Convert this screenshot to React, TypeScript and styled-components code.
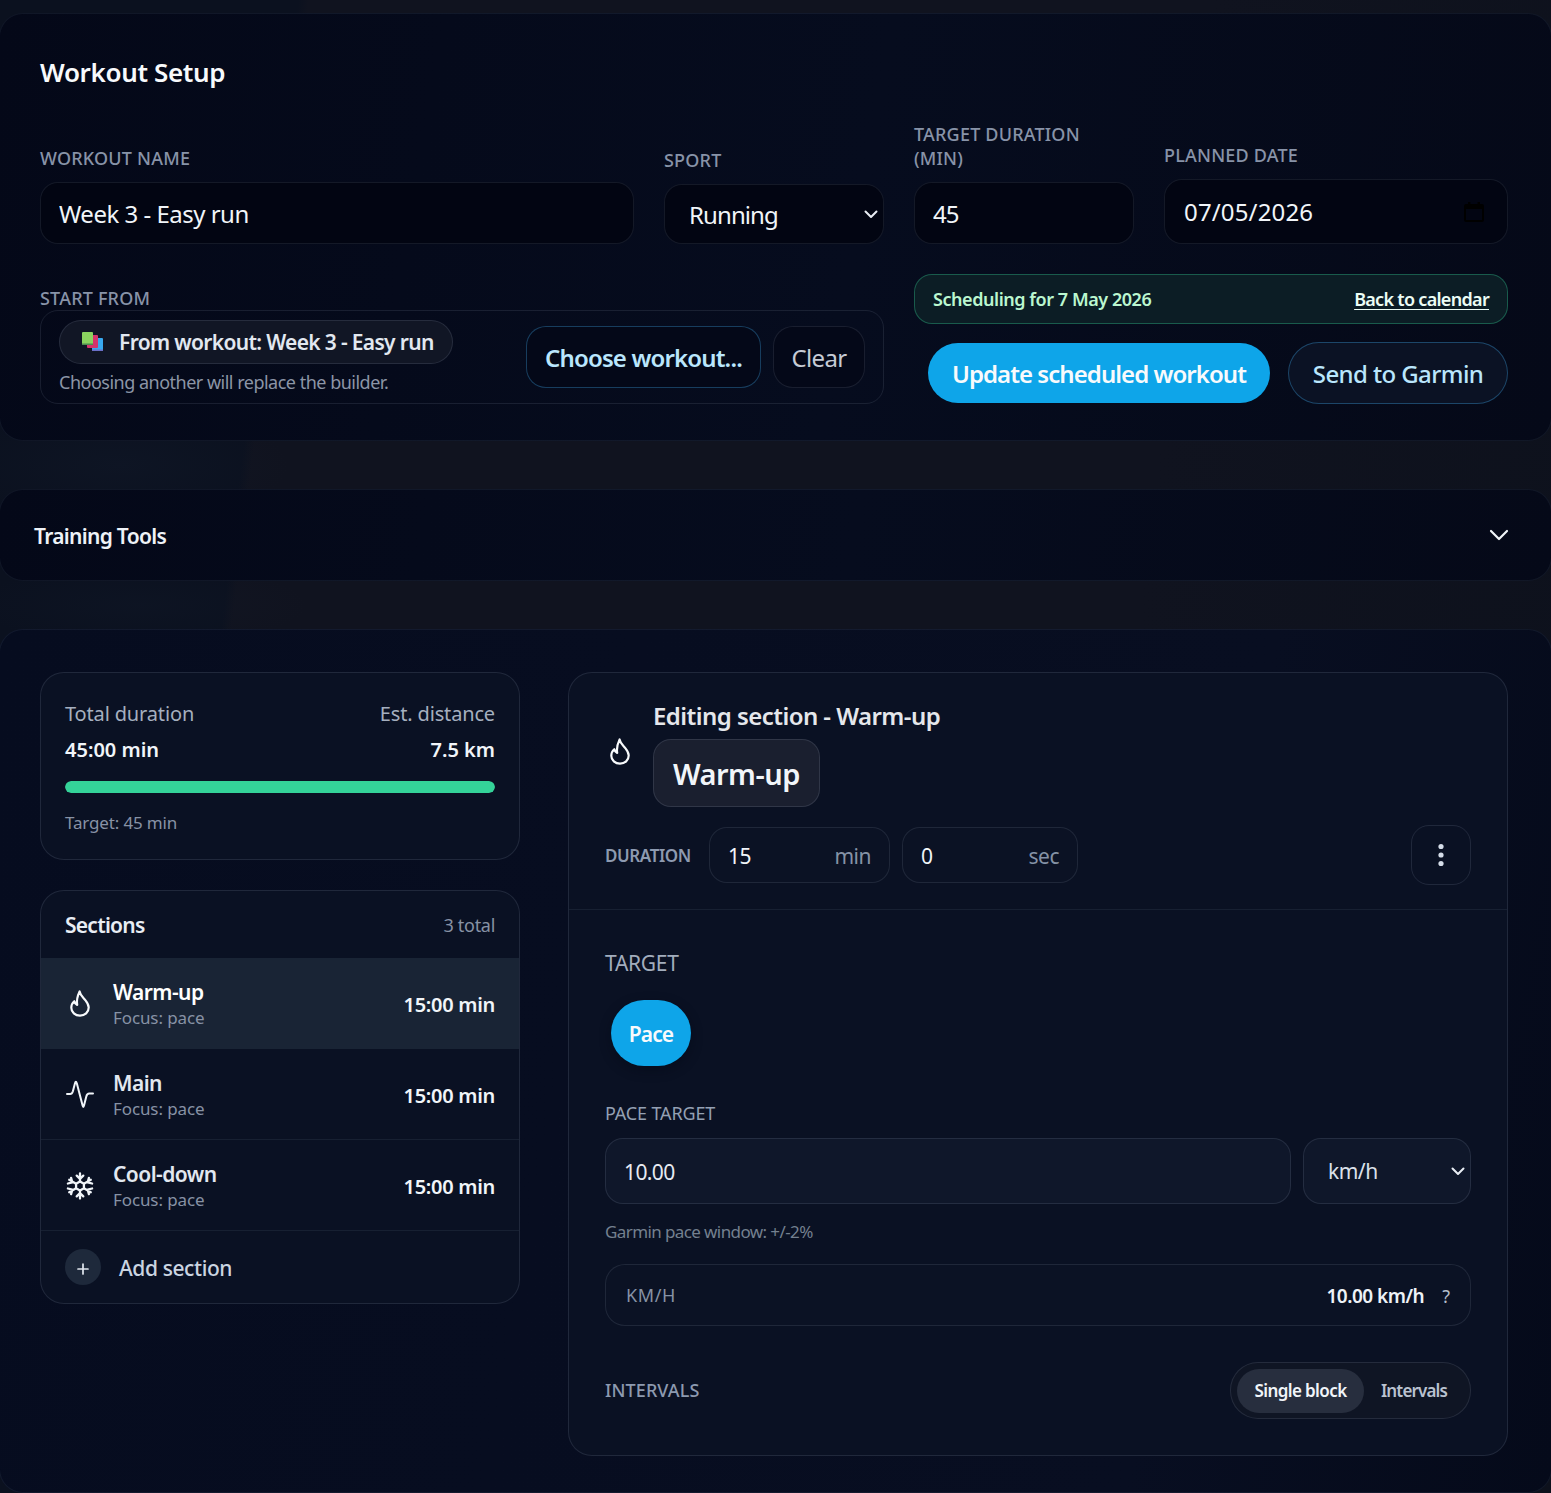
import React from "react";
import styled, { createGlobalStyle } from "styled-components";

const Global = createGlobalStyle`
  html, body { margin: 0; padding: 0; background: #0c111f; }
  body { font-family: "Noto Sans", "Open Sans", "Liberation Sans", sans-serif; color: #f1f5f9; }
  * { box-sizing: border-box; }
  input, select, button { font-family: inherit; }
`;

const chevronBg = `url("data:image/svg+xml;utf8,<svg xmlns='http://www.w3.org/2000/svg' width='14' height='9' viewBox='0 0 14 9' fill='none' stroke='%23e8edf4' stroke-width='2' stroke-linecap='round' stroke-linejoin='round'><path d='M1.5 1.5L7 7l5.5-5.5'/></svg>")`;

const Page = styled.div`
  width: 1551px;
  height: 1493px;
  overflow: hidden;
  padding-top: 13px;
  display: flex;
  flex-direction: column;
  gap: 48px;
  background:
    radial-gradient(ellipse 170px 60px at 120px 465px, rgba(40, 54, 80, 0.1), transparent),
    radial-gradient(ellipse 170px 40px at 140px 605px, rgba(40, 54, 80, 0.08), transparent),
    linear-gradient(97deg, #0b111f 0 17.2%, #10131f 17.8% 70%, #0d111c 100%);
`;

const Panel = styled.section`
  margin: 0 -1px;
  border: 1px solid rgba(148, 163, 184, 0.09);
  border-radius: 24px;
  background: linear-gradient(100deg, #040818 0%, #060c1e 55%, #050918 100%);
`;

const SetupPanel = styled(Panel)`
  height: 428px;
  padding: 0 43px 0 40px;
`;

const PanelTitle = styled.h2`
  margin: 0;
  padding-top: 40px;
  height: 108px;
  font-size: 26px;
  line-height: 36px;
  font-weight: 600;
  letter-spacing: -0.35px;
  color: #f8fafc;
`;

const FieldGrid = styled.div`
  display: grid;
  grid-template-columns: 594px 220px 220px 344px;
  column-gap: 30px;
  align-items: end;
  height: 122px;
`;

const Field = styled.label`
  display: flex;
  flex-direction: column;
`;

const Label = styled.span<{ $gap?: number }>`
  font-size: 18px;
  line-height: 24px;
  font-weight: 500;
  letter-spacing: 0.2px;
  color: #8893a8;
  text-transform: uppercase;
  max-width: 190px;
  margin-bottom: ${(p) => p.$gap ?? 12}px;
`;

const TextInput = styled.input<{ $tight?: boolean }>`
  width: 100%;
  height: 62px;
  padding: 0 18px;
  border: 1px solid rgba(148, 163, 184, 0.13);
  border-radius: 18px;
  background: #020512;
  color: #f1f5f9;
  font-size: 24px;
  letter-spacing: ${(p) => (p.$tight ? "-0.9px" : "-0.5px")};
  outline: none;
`;

const Select = styled.select`
  appearance: none;
  width: 100%;
  height: 60px;
  padding: 0 0 0 24px;
  border: 1px solid rgba(148, 163, 184, 0.13);
  border-radius: 18px;
  background: #020512 ${chevronBg} no-repeat right 5px center;
  color: #f1f5f9;
  font-size: 24px;
  letter-spacing: -0.9px;
  outline: none;
`;

const DateBox = styled.div`
  height: 65px;
  display: flex;
  align-items: center;
  padding: 0 23px 0 19px;
  border: 1px solid rgba(148, 163, 184, 0.13);
  border-radius: 18px;
  background: #020512;
`;

const DateInput = styled.input`
  flex: 1;
  min-width: 0;
  border: 0;
  padding: 0;
  background: transparent;
  color: #f1f5f9;
  font-size: 24px;
  letter-spacing: 0.15px;
  outline: none;
`;

const SecondRow = styled.div`
  margin-top: 30px;
  display: grid;
  grid-template-columns: 844px 594px;
  column-gap: 30px;
  height: 130px;
`;

const StartColumn = styled.div`
  display: flex;
  flex-direction: column;
  justify-content: flex-end;
`;

const StartBox = styled.div`
  height: 94px;
  display: flex;
  align-items: center;
  justify-content: space-between;
  padding: 0 18px;
  border: 1px solid rgba(148, 163, 184, 0.14);
  border-radius: 18px;
`;

const StartInfo = styled.div`
  display: flex;
  flex-direction: column;
  align-items: flex-start;
  gap: 5px;
`;

const Chip = styled.div`
  height: 44px;
  display: flex;
  align-items: center;
  gap: 15px;
  padding: 0 18px 0 22px;
  border: 1px solid rgba(148, 163, 184, 0.16);
  border-radius: 22px;
  background: #111625;
  font-size: 21px;
  font-weight: 600;
  letter-spacing: -0.67px;
  color: #e2e8f0;
`;

const Hint = styled.span`
  font-size: 18px;
  line-height: 26px;
  letter-spacing: -0.5px;
  color: #8c95a6;
`;

const ButtonRow = styled.div`
  display: flex;
  gap: 12px;
`;

const OutlineBtn = styled.button<{ $accent?: boolean; $w: number }>`
  width: ${(p) => p.$w}px;
  height: 62px;
  padding: 0;
  border: 1px solid ${(p) => (p.$accent ? "rgba(56, 150, 210, 0.38)" : "rgba(148, 163, 184, 0.15)")};
  border-radius: 20px;
  background: #040818;
  color: ${(p) => (p.$accent ? "#bae6fd" : "#c6cbd5")};
  font-size: 24px;
  font-weight: ${(p) => (p.$accent ? 600 : 400)};
  letter-spacing: ${(p) => (p.$accent ? "-0.85px" : "-0.7px")};
`;

const RightColumn = styled.div`
  display: flex;
  flex-direction: column;
  gap: 18px;
`;

const Banner = styled.div`
  height: 50px;
  display: flex;
  align-items: center;
  justify-content: space-between;
  padding: 0 18px;
  border: 1px solid rgba(52, 211, 153, 0.34);
  border-radius: 18px;
  background: #0c1d25;
  color: #bbf7d0;
  font-size: 18px;
  font-weight: 600;
  letter-spacing: -0.45px;
`;

const BannerLink = styled.a`
  color: #ecfdf5;
  letter-spacing: -0.7px;
  text-decoration: underline;
  text-underline-offset: 3px;
`;

const ActionRow = styled.div`
  display: flex;
  justify-content: flex-end;
  align-items: center;
  gap: 18px;
`;

const PrimaryBtn = styled.button`
  width: 342px;
  height: 60px;
  border: 0;
  border-radius: 30px;
  background: #0ea5e9;
  color: #f8fafc;
  font-size: 24px;
  font-weight: 600;
  letter-spacing: -0.95px;
`;

const GhostPill = styled.button`
  width: 220px;
  height: 62px;
  border: 1px solid rgba(56, 150, 210, 0.4);
  border-radius: 31px;
  background: #0b1224;
  color: #bae6fd;
  font-size: 24px;
  font-weight: 500;
  letter-spacing: -0.6px;
`;

const ToolsPanel = styled(Panel)`
  height: 92px;
  display: flex;
  align-items: center;
  justify-content: space-between;
  padding: 2px 42px 0 34px;
  font-size: 21px;
  font-weight: 600;
  letter-spacing: -0.7px;
  color: #eef2f7;
`;

const ToolsChevron = styled.span`
  display: flex;
  margin-top: -3px;
`;

const BuilderPanel = styled(Panel)`
  height: 864px;
  display: grid;
  grid-template-columns: 480px 940px;
  column-gap: 48px;
  align-items: start;
  padding: 42px 0 0 40px;
  background: linear-gradient(100deg, #060c1f 0%, #080e21 75%, #050a1a 100%);
`;

const Column = styled.div`
  display: flex;
  flex-direction: column;
  gap: 30px;
`;

const Card = styled.div`
  border: 1px solid rgba(148, 163, 184, 0.16);
  border-radius: 24px;
  background: #0a1123;
  overflow: hidden;
`;

const SummaryCard = styled(Card)`
  height: 188px;
  padding: 24px 24px 0;
`;

const SplitRow = styled.div<{ $h: number }>`
  height: ${(p) => p.$h}px;
  display: flex;
  align-items: center;
  justify-content: space-between;
`;

const SummaryLabel = styled.span`
  font-size: 20px;
  letter-spacing: -0.15px;
  color: #a5afbf;
`;

const SummaryValue = styled.span`
  font-size: 20px;
  font-weight: 600;
  letter-spacing: 0;
  color: #f1f5f9;
`;

const Track = styled.div`
  margin-top: 12px;
  height: 12px;
  border-radius: 6px;
  background: #1e293b;
  overflow: hidden;
`;

const Fill = styled.div`
  height: 100%;
  background: #34d399;
  border-radius: 6px;
`;

const TargetNote = styled.div`
  margin-top: 18px;
  font-size: 17px;
  line-height: 24px;
  letter-spacing: -0.15px;
  color: #8792a5;
`;

const SectionsHeader = styled.div`
  height: 67px;
  display: flex;
  align-items: center;
  justify-content: space-between;
  padding: 0 24px;
  font-size: 21px;
  font-weight: 600;
  letter-spacing: -0.75px;
  color: #e8edf4;
`;

const CountText = styled.span`
  font-size: 18px;
  font-weight: 400;
  letter-spacing: -0.3px;
  color: #8792a5;
`;

const SectionRow = styled.div<{ $active?: boolean }>`
  height: 91px;
  display: flex;
  align-items: center;
  gap: 18px;
  padding: 2px 24px 0;
  background: ${(p) => (p.$active ? "#192435" : "transparent")};
  border-bottom: 1px solid ${(p) => (p.$active ? "transparent" : "rgba(148, 163, 184, 0.1)")};
  color: ${(p) => (p.$active ? "#fff" : "#e2e8f0")};
`;

const IconSlot = styled.span`
  width: 30px;
  height: 30px;
  flex: none;
  display: flex;
  align-items: center;
  justify-content: center;
`;

const RowText = styled.div`
  flex: 1;
  display: flex;
  flex-direction: column;
`;

const RowTitle = styled.span`
  font-size: 21px;
  line-height: 28px;
  font-weight: 600;
  letter-spacing: -0.55px;
`;

const RowSub = styled.span`
  font-size: 17px;
  line-height: 24px;
  letter-spacing: -0.1px;
  color: #8792a5;
`;

const RowTime = styled.span`
  font-size: 20px;
  font-weight: 600;
  letter-spacing: -0.3px;
  color: #f1f5f9;
`;

const AddRow = styled.div`
  height: 72px;
  display: flex;
  align-items: center;
  gap: 18px;
  padding: 1px 24px 0;
  font-size: 21px;
  font-weight: 500;
  letter-spacing: -0.4px;
  color: #cbd5e1;
`;

const PlusBadge = styled.span`
  width: 36px;
  height: 36px;
  margin-top: -2px;
  padding-top: 5px;
  border-radius: 50%;
  background: #1e293b;
  display: flex;
  align-items: center;
  justify-content: center;
  color: #e2e8f0;
`;

const EditorCard = styled(Card)`
  height: 784px;
`;

const EditorHead = styled.div`
  height: 237px;
  padding: 29px 36px 0;
  border-bottom: 1px solid rgba(148, 163, 184, 0.1);
`;

const TitleRow = styled.div`
  display: flex;
  align-items: center;
  gap: 18px;
`;

const TitleStack = styled.div`
  display: flex;
  flex-direction: column;
  align-items: flex-start;
  gap: 9px;
`;

const EditorTitle = styled.span`
  font-size: 24px;
  line-height: 28px;
  font-weight: 600;
  letter-spacing: -0.55px;
  color: #e5e7eb;
`;

const NameChip = styled.div`
  height: 68px;
  padding: 0 19px;
  display: flex;
  align-items: center;
  border: 1px solid rgba(148, 163, 184, 0.18);
  border-radius: 18px;
  background: #1a1f2f;
  font-size: 29px;
  font-weight: 600;
  letter-spacing: -0.5px;
  color: #f1f5f9;
`;

const HeadFlame = styled(IconSlot)`
  margin-top: -6px;
`;

const DurationRow = styled.div`
  margin-top: 18px;
  display: flex;
  align-items: center;
  gap: 12px;
`;

const DurationLabel = styled.span`
  width: 86px;
  margin-right: 6px;
  font-size: 17px;
  font-weight: 600;
  letter-spacing: -0.4px;
  color: #8d9ab0;
`;

const UnitBox = styled.div<{ $w: number }>`
  width: ${(p) => p.$w}px;
  height: 56px;
  display: flex;
  align-items: center;
  justify-content: space-between;
  padding: 1px 18px 0 18px;
  border: 1px solid rgba(148, 163, 184, 0.15);
  border-radius: 18px;
  background: #0b1224;
  font-size: 21px;
  letter-spacing: -0.5px;
  color: #f1f5f9;
`;

const Unit = styled.span`
  color: #8592a6;
`;

const KebabBtn = styled.button`
  margin-left: auto;
  width: 60px;
  height: 60px;
  display: flex;
  align-items: center;
  justify-content: center;
  border: 1px solid rgba(148, 163, 184, 0.16);
  border-radius: 18px;
  background: transparent;
  padding: 0;
`;

const EditorBody = styled.div`
  padding: 0 36px;
`;

const TargetLabel = styled.div`
  margin-top: 37px;
  font-size: 21px;
  line-height: 32px;
  letter-spacing: -0.3px;
  color: #a2adbd;
`;

const PaceBtn = styled.button`
  display: block;
  margin: 21px 0 0 6px;
  width: 80px;
  height: 66px;
  border: 0;
  padding: 2px 0 0;
  border-radius: 33px;
  background: #0ea5e9;
  color: #f8fafc;
  font-size: 21px;
  font-weight: 600;
  letter-spacing: -0.9px;
  box-shadow: 0 4px 12px rgba(2, 8, 23, 0.45);
`;

const SubLabel = styled.div`
  margin-top: 34px;
  font-size: 18px;
  line-height: 26px;
  letter-spacing: -0.15px;
  color: #94a0b3;
`;

const PaceRow = styled.div`
  margin-top: 12px;
  display: flex;
  gap: 12px;
`;

const PaceInput = styled.input`
  flex: 1;
  min-width: 0;
  height: 66px;
  padding: 1px 19px 0 18px;
  border: 1px solid rgba(148, 163, 184, 0.16);
  border-radius: 18px;
  background: #0f172a;
  color: #e7ebf2;
  font-size: 21px;
  letter-spacing: -0.6px;
  outline: none;
`;

const UnitSelect = styled.select`
  appearance: none;
  width: 168px;
  height: 66px;
  padding: 0 0 0 24px;
  border: 1px solid rgba(148, 163, 184, 0.16);
  border-radius: 18px;
  background: #0f172a ${chevronBg} no-repeat right 5px center;
  color: #dbe1ea;
  font-size: 21px;
  letter-spacing: -0.5px;
  outline: none;
`;

const WindowNote = styled.div`
  margin-top: 16px;
  font-size: 17px;
  line-height: 24px;
  letter-spacing: -0.6px;
  color: #74808f;
`;

const ReadoutRow = styled.div`
  margin-top: 20px;
  height: 62px;
  display: flex;
  align-items: center;
  padding: 0 20px;
  border: 1px solid rgba(148, 163, 184, 0.15);
  border-radius: 20px;
  background: #0b1224;
`;

const ReadoutLabel = styled.span`
  flex: 1;
  font-size: 18px;
  letter-spacing: 0.6px;
  color: #8792a5;
`;

const ReadoutValue = styled.span`
  margin-top: 2px;
  font-size: 19px;
  font-weight: 600;
  letter-spacing: -0.5px;
  color: #eef2f7;
`;

const Help = styled.span`
  margin: 2px 0 0 18px;
  font-size: 18px;
  color: #b4bdca;
`;

const IntervalsRow = styled.div`
  margin-top: 36px;
  display: flex;
  align-items: center;
  justify-content: space-between;
`;

const IntervalsLabel = styled.span`
  margin-top: -2px;
  font-size: 18px;
  font-weight: 500;
  letter-spacing: 0.1px;
  color: #8d9ab0;
`;

const Segmented = styled.div`
  width: 241px;
  height: 57px;
  display: flex;
  align-items: center;
  padding: 0 6px;
  border: 1px solid rgba(148, 163, 184, 0.16);
  border-radius: 28px;
  background: #0f1524;
`;

const Segment = styled.button<{ $active?: boolean }>`
  height: 44px;
  padding: 0;
  width: ${(p) => (p.$active ? 127 : 100)}px;
  border: 0;
  border-radius: 22px;
  background: ${(p) => (p.$active ? "#272e3e" : "transparent")};
  color: ${(p) => (p.$active ? "#f1f5f9" : "#b9c2d0")};
  font-size: 17px;
  font-weight: 600;
  letter-spacing: ${(p) => (p.$active ? "-0.6px" : "-0.85px")};
`;

const FlameIcon = () => (
  <svg width="30" height="30" viewBox="0 0 30 30" fill="none" stroke="#f8fafc" strokeWidth="2.2" strokeLinecap="round" strokeLinejoin="round">
    <path d="M14.6 2.4c.6 4 3.5 6 5.9 9 1.9 2.4 3.2 4.6 3.2 7.2 0 4.8-3.9 8-8.7 8s-8.7-3.4-8.7-7.8c0-2.8 1.2-5 3-6.6.4 1.8 1.3 3 2.9 3.7-.8-4.6.3-9 2.4-13.5z" />
  </svg>
);

const PulseIcon = () => (
  <svg width="30" height="30" viewBox="0 0 30 30" fill="none" stroke="#f1f5f9" strokeWidth="2" strokeLinecap="round" strokeLinejoin="round">
    <path d="M2 14h3.2c1.6 0 2.1-.8 2.7-2.8L10 3.2c.5-1.8 1.2-1.8 1.8 0l5.8 22.4c.4 1.7 1 1.7 1.4 0l2.3-9.2c.5-2 1.3-2.9 3-2.9H28" />
  </svg>
);

const SnowIcon = () => (
  <svg width="30" height="30" viewBox="0 0 30 30" fill="none" stroke="#f1f5f9" strokeWidth="2.3" strokeLinecap="round" strokeLinejoin="round">
    <path d="M15 2.5v8M11.7 4.6l3.3 3.2 3.3-3.2M15 19.5v8M11.7 25.4l3.3-3.2 3.3 3.2" />
    <path d="M4.2 8.8l6.9 3.95M2.9 12.5l4.4-1.2-1.2-4.4M25.8 21.2l-6.9-3.95M27.1 17.5l-4.4 1.2 1.2 4.4" />
    <path d="M25.8 8.8l-6.9 3.95M27.1 12.5l-4.4-1.2 1.2-4.4M4.2 21.2l6.9-3.95M2.9 17.5l4.4 1.2-1.2 4.4" />
    <path d="M15 10.5l3.9 2.25v4.5L15 19.5l-3.9-2.25v-4.5z" />
  </svg>
);

const PlusIcon = () => (
  <svg width="12" height="12" viewBox="0 0 12 12" fill="none" stroke="currentColor" strokeWidth="1.7" strokeLinecap="round">
    <path d="M6 1v10M1 6h10" />
  </svg>
);

const BooksIcon = () => (
  <svg width="22" height="20" viewBox="0 0 22 20" aria-hidden="true">
    <rect x="10" y="6" width="11" height="13" rx="1" fill="#38a9f0" />
    <rect x="10" y="17.5" width="11" height="1.5" fill="#6a6fc7" />
    <rect x="5" y="3" width="11" height="13" rx="1" fill="#d6336c" />
    <rect x="0" y="0" width="11" height="13" rx="1" fill="#8bd35f" />
    <rect x="0" y="11.5" width="11" height="1.5" fill="#4f8a4f" />
  </svg>
);

const CalendarIcon = () => (
  <svg width="20" height="20" viewBox="0 0 20 20" fill="#000" aria-hidden="true">
    <path d="M4 0h2.4v2h7.2V0H16v2h2a2 2 0 0 1 2 2v14a2 2 0 0 1-2 2H2a2 2 0 0 1-2-2V4a2 2 0 0 1 2-2h2V0zM2 7v11h16V7H2z" />
  </svg>
);

const Chevron = () => (
  <svg width="20" height="12" viewBox="0 0 20 12" fill="none" stroke="#f1f5f9" strokeWidth="2.2" strokeLinecap="round" strokeLinejoin="round">
    <path d="M2 2l8 8 8-8" />
  </svg>
);

const Kebab = () => (
  <svg width="6" height="24" viewBox="0 0 6 24" fill="#d5dde8">
    <circle cx="3" cy="3.5" r="2.6" />
    <circle cx="3" cy="12" r="2.6" />
    <circle cx="3" cy="20.5" r="2.6" />
  </svg>
);

const sections = [
  { name: "Warm-up", icon: <FlameIcon />, active: true },
  { name: "Main", icon: <PulseIcon />, active: false },
  { name: "Cool-down", icon: <SnowIcon />, active: false },
];

export default function App() {
  return (
    <>
      <Global />
      <Page>
        <SetupPanel>
          <PanelTitle>Workout Setup</PanelTitle>
          <FieldGrid>
            <Field>
              <Label>Workout name</Label>
              <TextInput defaultValue="Week 3 - Easy run" />
            </Field>
            <Field>
              <Label>Sport</Label>
              <Select defaultValue="Running">
                <option>Running</option>
              </Select>
            </Field>
            <Field>
              <Label>Target duration (min)</Label>
              <TextInput $tight defaultValue="45" />
            </Field>
            <Field>
              <Label>Planned date</Label>
              <DateBox>
                <DateInput defaultValue="07/05/2026" />
                <CalendarIcon />
              </DateBox>
            </Field>
          </FieldGrid>
          <SecondRow>
            <StartColumn>
              <Label $gap={0}>Start from</Label>
              <StartBox>
                <StartInfo>
                  <Chip>
                    <BooksIcon />
                    From workout: Week 3 - Easy run
                  </Chip>
                  <Hint>Choosing another will replace the builder.</Hint>
                </StartInfo>
                <ButtonRow>
                  <OutlineBtn $accent $w={235}>Choose workout...</OutlineBtn>
                  <OutlineBtn $w={92}>Clear</OutlineBtn>
                </ButtonRow>
              </StartBox>
            </StartColumn>
            <RightColumn>
              <Banner>
                <span>Scheduling for 7 May 2026</span>
                <BannerLink>Back to calendar</BannerLink>
              </Banner>
              <ActionRow>
                <PrimaryBtn>Update scheduled workout</PrimaryBtn>
                <GhostPill>Send to Garmin</GhostPill>
              </ActionRow>
            </RightColumn>
          </SecondRow>
        </SetupPanel>

        <ToolsPanel>
          <span>Training Tools</span>
          <ToolsChevron>
            <Chevron />
          </ToolsChevron>
        </ToolsPanel>

        <BuilderPanel>
          <Column>
            <SummaryCard>
              <SplitRow $h={32}>
                <SummaryLabel>Total duration</SummaryLabel>
                <SummaryLabel>Est. distance</SummaryLabel>
              </SplitRow>
              <SplitRow $h={40}>
                <SummaryValue>45:00 min</SummaryValue>
                <SummaryValue>7.5 km</SummaryValue>
              </SplitRow>
              <Track>
                <Fill style={{ width: "100%" }} />
              </Track>
              <TargetNote>Target: 45 min</TargetNote>
            </SummaryCard>
            <Card>
              <SectionsHeader>
                <span>Sections</span>
                <CountText>3 total</CountText>
              </SectionsHeader>
              {sections.map((s) => (
                <SectionRow key={s.name} $active={s.active}>
                  <IconSlot>{s.icon}</IconSlot>
                  <RowText>
                    <RowTitle>{s.name}</RowTitle>
                    <RowSub>Focus: pace</RowSub>
                  </RowText>
                  <RowTime>15:00 min</RowTime>
                </SectionRow>
              ))}
              <AddRow>
                <PlusBadge>
                  <PlusIcon />
                </PlusBadge>
                Add section
              </AddRow>
            </Card>
          </Column>

          <EditorCard>
            <EditorHead>
              <TitleRow>
                <HeadFlame>
                  <FlameIcon />
                </HeadFlame>
                <TitleStack>
                  <EditorTitle>Editing section - Warm-up</EditorTitle>
                  <NameChip>Warm-up</NameChip>
                </TitleStack>
              </TitleRow>
              <DurationRow>
                <DurationLabel>DURATION</DurationLabel>
                <UnitBox $w={181}>
                  <span>15</span>
                  <Unit>min</Unit>
                </UnitBox>
                <UnitBox $w={176}>
                  <span>0</span>
                  <Unit>sec</Unit>
                </UnitBox>
                <KebabBtn aria-label="More">
                  <Kebab />
                </KebabBtn>
              </DurationRow>
            </EditorHead>
            <EditorBody>
              <TargetLabel>TARGET</TargetLabel>
              <PaceBtn>Pace</PaceBtn>
              <SubLabel>PACE TARGET</SubLabel>
              <PaceRow>
                <PaceInput defaultValue="10.00" />
                <UnitSelect defaultValue="km/h">
                  <option>km/h</option>
                </UnitSelect>
              </PaceRow>
              <WindowNote>Garmin pace window: +/-2%</WindowNote>
              <ReadoutRow>
                <ReadoutLabel>KM/H</ReadoutLabel>
                <ReadoutValue>10.00 km/h</ReadoutValue>
                <Help>?</Help>
              </ReadoutRow>
              <IntervalsRow>
                <IntervalsLabel>INTERVALS</IntervalsLabel>
                <Segmented>
                  <Segment $active>Single block</Segment>
                  <Segment>Intervals</Segment>
                </Segmented>
              </IntervalsRow>
            </EditorBody>
          </EditorCard>
        </BuilderPanel>
      </Page>
    </>
  );
}
